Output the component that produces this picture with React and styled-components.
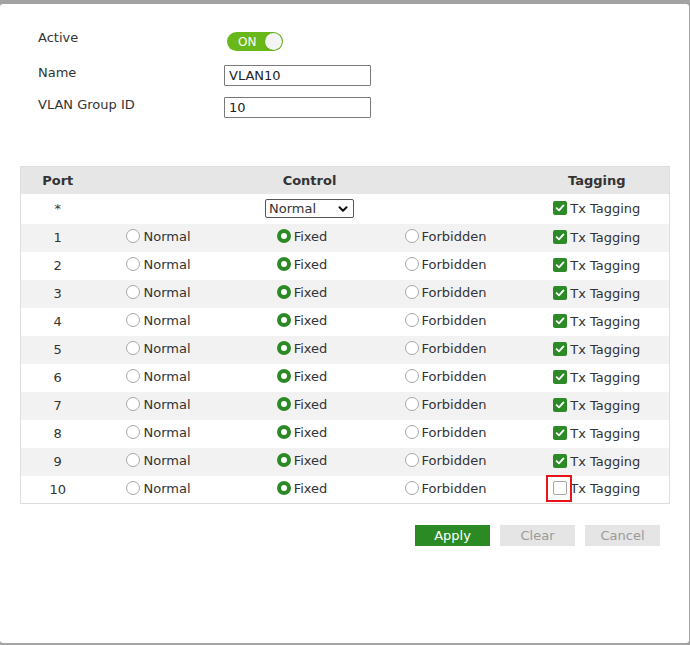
import React from "react";
import styled, { createGlobalStyle } from "styled-components";
import { ChevronDown } from "lucide-react";

const GlobalStyle = createGlobalStyle`
  html, body {
    margin: 0;
    padding: 0;
    background: #a3a3a3;
    font-family: "DejaVu Sans", "Liberation Sans", sans-serif;
    font-size: 13px;
    color: #333;
  }
  * {
    box-sizing: border-box;
  }
`;

const ports = [1, 2, 3, 4, 5, 6, 7, 8, 9, 10];

const Radio = ({ checked, label }) => (
  <RadioWrap>
    <RadioDot $checked={checked} />
    <span>{label}</span>
  </RadioWrap>
);

const Check = ({ checked, highlight }) => (
  <CheckWrap>
    <CheckBox $checked={checked}>
      {checked && (
        <svg width="10" height="10" viewBox="0 0 10 10">
          <path d="M1.6 5.2 L4 7.4 L8.5 2.4" fill="none" stroke="#fff" strokeWidth="1.8" strokeLinecap="round" strokeLinejoin="round" />
        </svg>
      )}
      {highlight && <Highlight />}
    </CheckBox>
    <span>Tx Tagging</span>
  </CheckWrap>
);

const App = () => {
  return (
    <Page>
      <GlobalStyle />
      <Panel>
        <Form>
          <FormRow $height={34}>
            <Label $top={1}>Active</Label>
            <Toggle>
              <ToggleText>ON</ToggleText>
              <Knob />
            </Toggle>
          </FormRow>
          <FormRow>
            <Label $top={2}>Name</Label>
            <TextInput defaultValue="VLAN10" />
          </FormRow>
          <FormRow>
            <Label $top={2}>VLAN Group ID</Label>
            <TextInput defaultValue="10" />
          </FormRow>
        </Form>

        <Table>
          <colgroup>
            <col style={{ width: 74 }} />
            <col style={{ width: 143 }} />
            <col style={{ width: 144 }} />
            <col style={{ width: 143 }} />
            <col style={{ width: 145 }} />
          </colgroup>
          <thead>
            <HeadRow>
              <Th>Port</Th>
              <Th colSpan={3}>Control</Th>
              <Th>Tagging</Th>
            </HeadRow>
          </thead>
          <tbody>
            <AllRow>
              <Td>*</Td>
              <Td colSpan={3}>
                <SelectWrap>
                  <Select defaultValue="Normal">
                    <option>Normal</option>
                    <option>Fixed</option>
                    <option>Forbidden</option>
                  </Select>
                  <SelectArrow size={14} strokeWidth={3.5} />
                </SelectWrap>
              </Td>
              <Td>
                <Check checked />
              </Td>
            </AllRow>
            {ports.map((port, i) => (
              <PortRow key={port} $shaded={i % 2 === 0}>
                <Td>{port}</Td>
                <RadioTd>
                  <Radio label="Normal" />
                </RadioTd>
                <RadioTd>
                  <Radio checked label="Fixed" />
                </RadioTd>
                <RadioTd>
                  <Radio label="Forbidden" />
                </RadioTd>
                <Td>
                  <Check checked={port !== 10} highlight={port === 10} />
                </Td>
              </PortRow>
            ))}
          </tbody>
        </Table>

        <Actions>
          <Button $primary>Apply</Button>
          <Button>Clear</Button>
          <Button>Cancel</Button>
        </Actions>
      </Panel>
    </Page>
  );
};

export default App;

const Page = styled.div`
  width: 690px;
  height: 645px;
  padding-top: 4px;
  overflow: hidden;
`;

const Panel = styled.div`
  width: 689px;
  height: 639px;
  background: #fff;
  border-radius: 3px;
  padding: 0 20px;
`;

const Form = styled.div`
  padding: 25px 0 0 18px;
  display: flex;
  flex-direction: column;
`;

const FormRow = styled.div`
  display: grid;
  grid-template-columns: 186px auto;
  align-items: start;
  height: ${(p) => p.$height || 32}px;
`;

const Label = styled.div`
  line-height: 16px;
  padding-top: ${(p) => p.$top}px;
  color: #333;
`;

const Toggle = styled.div`
  margin-top: 3px;
  margin-left: 3px;
  width: 56px;
  height: 19px;
  border-radius: 10px;
  background: #69b81a;
  display: flex;
  align-items: center;
  justify-content: space-between;
  padding: 0 1px 0 11px;
`;

const ToggleText = styled.span`
  color: #fff;
  font-size: 12px;
`;

const Knob = styled.span`
  width: 17px;
  height: 17px;
  border-radius: 50%;
  background: #f4f4f4;
  box-shadow: 0 0 1px rgba(0, 0, 0, 0.35);
`;

const TextInput = styled.input`
  margin-top: 2px;
  width: 147px;
  height: 21px;
  border: 1px solid #7a7a7a;
  border-radius: 1px;
  padding: 0 4px;
  font: inherit;
  font-size: 13px;
  color: #222;
  outline: none;
`;

const Table = styled.table`
  margin-top: 39px;
  width: 649px;
  border-collapse: collapse;
  table-layout: fixed;
  border: 1px solid #dedede;
`;

const HeadRow = styled.tr`
  background: #e6e6e6;
  height: 27px;
`;

const Th = styled.th`
  font-weight: bold;
  font-size: 13px;
  color: #333;
  text-align: center;
  padding: 0;
`;

const AllRow = styled.tr`
  background: #fff;
  height: 30px;
`;

const PortRow = styled.tr`
  background: ${(p) => (p.$shaded ? "#f2f2f2" : "#fff")};
  height: 28px;
`;

const Td = styled.td`
  text-align: center;
  padding: 0;
  vertical-align: middle;
  color: #333;
`;

const RadioTd = styled(Td)`
  padding-right: 15px;
`;

const RadioWrap = styled.span`
  display: inline-flex;
  align-items: center;
  gap: 3px;
`;

const RadioDot = styled.span`
  width: 14px;
  height: 14px;
  border-radius: 50%;
  background: #fff;
  border: ${(p) => (p.$checked ? "4px solid #2c8a26" : "1px solid #a8a8a8")};
`;

const CheckWrap = styled.span`
  display: inline-flex;
  align-items: center;
  gap: 3px;
`;

const CheckBox = styled.span`
  position: relative;
  width: 14px;
  height: 14px;
  border-radius: 2px;
  display: inline-flex;
  align-items: center;
  justify-content: center;
  background: ${(p) => (p.$checked ? "#2d8b27" : "#fff")};
  border: ${(p) => (p.$checked ? "none" : "1px solid #a8a8a8")};
`;

const Highlight = styled.span`
  position: absolute;
  left: -8px;
  top: -7px;
  width: 26px;
  height: 27px;
  border: 2px solid #e8141b;
`;

const SelectWrap = styled.span`
  position: relative;
  display: inline-block;
  width: 89px;
  height: 19px;
`;

const Select = styled.select`
  appearance: none;
  width: 89px;
  height: 19px;
  border: 1px solid #555;
  border-radius: 2px;
  background: #fff;
  padding: 0 0 0 3px;
  font: inherit;
  font-size: 13px;
  color: #333;
  outline: none;
`;

const SelectArrow = styled(ChevronDown)`
  position: absolute;
  right: 4px;
  top: 3px;
  color: #111;
  pointer-events: none;
`;

const Actions = styled.div`
  display: flex;
  justify-content: flex-end;
  gap: 10px;
  margin-top: 21px;
  padding-right: 9px;
`;

const Button = styled.button`
  width: 75px;
  height: 21px;
  border: none;
  border-radius: 0;
  padding: 0;
  font: inherit;
  font-size: 13px;
  background: ${(p) => (p.$primary ? "#2b8a24" : "#e5e5e5")};
  color: ${(p) => (p.$primary ? "#fff" : "#9a9a9a")};
`;
